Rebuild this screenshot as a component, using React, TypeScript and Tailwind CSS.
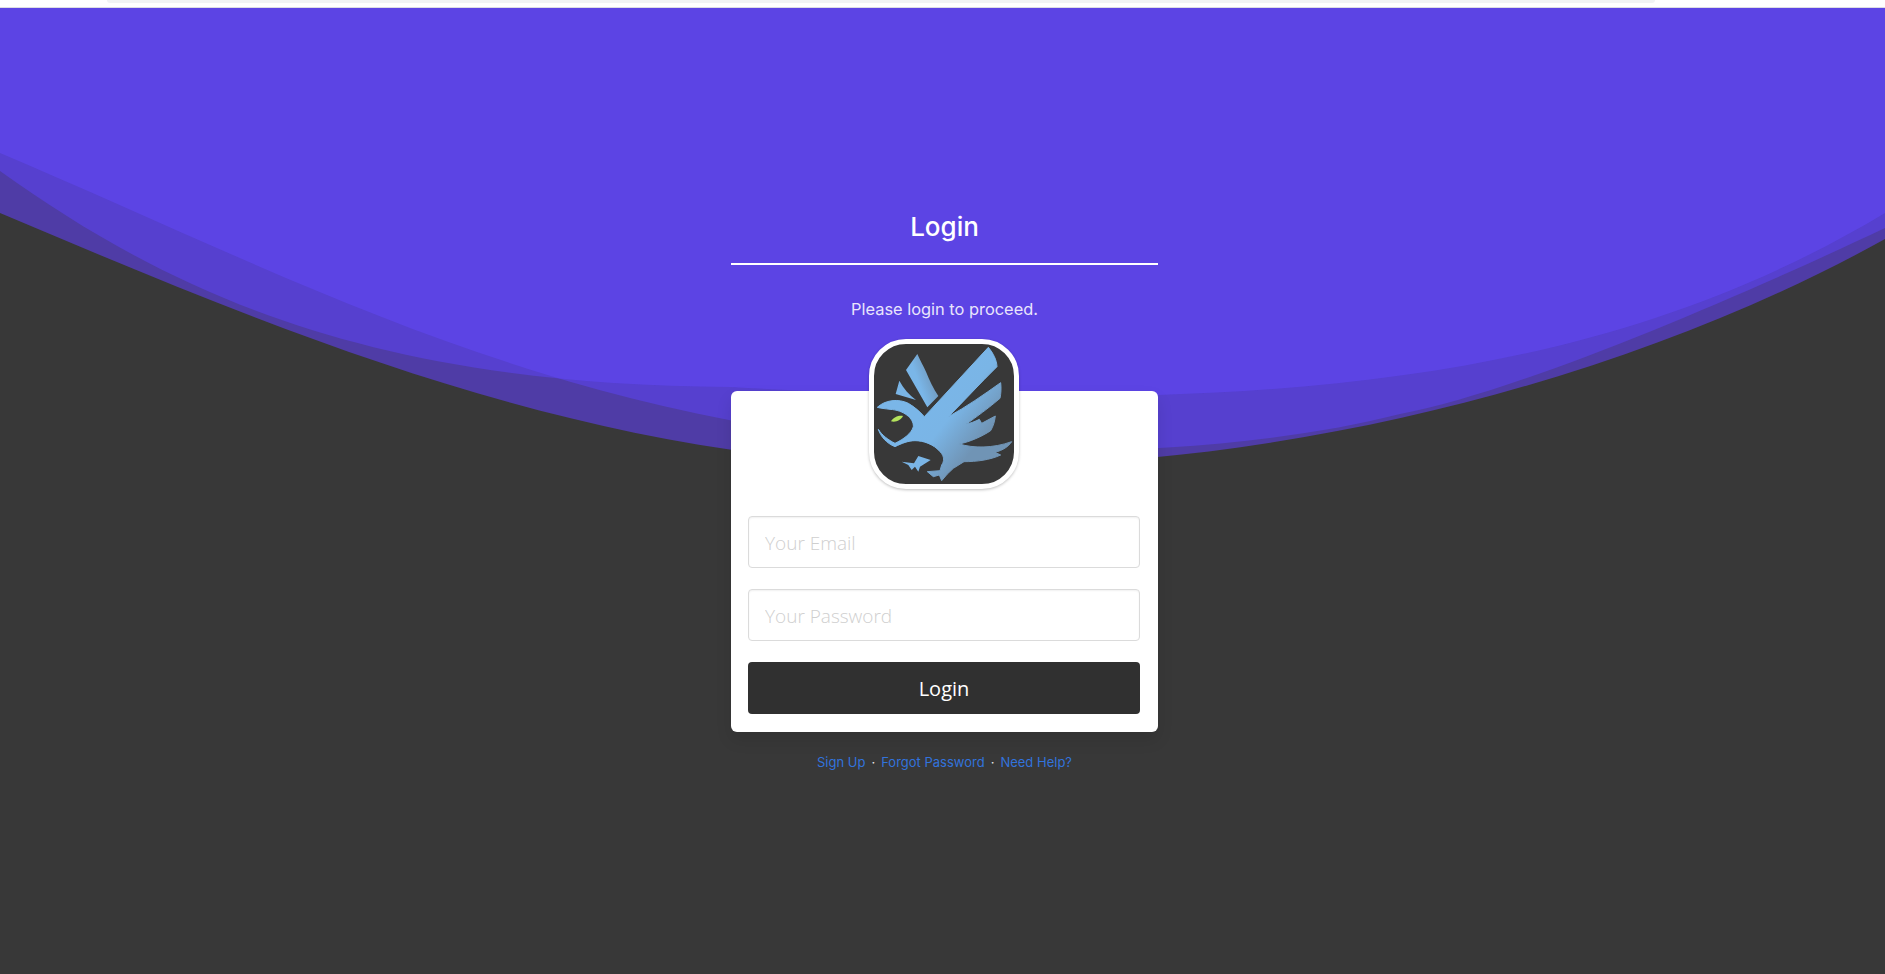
const EDGE = "M0,213 C300,340 600,465 945,466 C1300,472 1650,370 1885,239 L1885,0 L0,0 Z";
const CURVE_A = "M0,153 C300,280 560,425 950,447 C1100,458 1280,445 1400,414 C1520,392 1750,292 1885,228 L1885,0 L0,0 Z";
const CURVE_C = "M0,171 C180,300 380,385 731,387 C860,394 1000,399 1158,395 C1450,386 1680,336 1885,213 L1885,0 L0,0 Z";

function Waves() {
  return (
    <svg className="absolute inset-0 h-full w-full" viewBox="0 0 1885 974" preserveAspectRatio="none" aria-hidden="true">
      <defs>
        <clipPath id="clipC">
          <path d={CURVE_C} />
        </clipPath>
      </defs>
      <path d={EDGE} fill="#4f3ca6" />
      <path d={CURVE_A} fill="#5640cf" />
      <path d={CURVE_C} fill="#5640cf" />
      <path d={CURVE_A} fill="#5c44e4" clipPath="url(#clipC)" />
    </svg>
  );
}

function Logo() {
  return (
    <div className="relative z-10 -mb-[98px] ml-[138px] h-[150px] w-[150px] overflow-hidden rounded-[37px] border-[5px] border-white bg-[#383838] shadow-[0_1px_3px_rgba(0,0,0,0.25)]">
      <svg viewBox="102 72 420 420" className="block h-full w-full" aria-hidden="true">
        <defs>
          <linearGradient id="birdFill" gradientUnits="userSpaceOnUse" x1="320" y1="180" x2="470" y2="300">
            <stop offset="0" stopColor="#7ab6e8" />
            <stop offset="0.4" stopColor="#7ab5e6" />
            <stop offset="1" stopColor="#7094b5" />
          </linearGradient>
          <linearGradient id="wingFill" gradientUnits="userSpaceOnUse" x1="235" y1="185" x2="290" y2="165">
            <stop offset="0" stopColor="#7ab6e8" />
            <stop offset="1" stopColor="#6f93b4" />
          </linearGradient>
        </defs>
        <path
          fill="url(#birdFill)"
          stroke="url(#birdFill)"
          strokeWidth="3"
          strokeLinejoin="round"
          d="M112,262 C135,240 175,235 205,250 C225,262 240,275 253,290 L445,82 C460,100 470,120 471,140 C420,190 370,245 325,290 C380,260 430,225 482,188 C484,205 483,220 480,235 C445,265 410,290 378,313 C390,310 405,305 418,298 L425,310 L466,288 C464,305 460,318 452,332 C425,350 390,365 358,372 C400,385 460,385 515,365 C505,380 490,390 465,397 L482,405 C450,420 410,425 372,425 L340,445 L322,462 L305,482 L298,465 L280,470 L262,455 L300,452 L305,435 C312,425 315,410 300,395 C280,372 250,362 225,362 C205,362 185,370 165,380 C140,370 122,350 115,328 C125,345 145,360 165,370 C190,358 215,340 220,320 C222,295 190,270 150,268 C135,266 122,265 112,262 Z"
        />
        <path fill="url(#wingFill)" d="M232,102 L198,150 L262,262 L295,228 C280,205 268,180 258,155 C250,138 240,120 232,102 Z" />
        <path fill="#7ab5e6" d="M178,182 L167,222 L228,240 C208,225 190,205 178,182 Z" />
        <path fill="#7ab5e6" d="M185,425 L222,430 L235,408 L272,420 L240,440 L235,455 L225,440 L215,450 L205,435 Z" />
        <path fill="#b4e35c" d="M153,304 C160,292 175,286 189,288 C183,300 168,308 153,304 Z" />
      </svg>
    </div>
  );
}

const inputClass =
  "block h-[52px] w-full rounded border border-[#dbdbdb] bg-white px-[16px] pt-[2px] font-['Open_Sans',sans-serif] text-[19px] font-light text-[#363636] shadow-[inset_0_1px_2px_rgba(10,10,10,0.06)] outline-none placeholder:text-[#cfcfcf]";

export default function App() {
  return (
    <div className="flex h-[974px] flex-col overflow-hidden bg-[#383838]">
      <header className="relative z-10 h-[8px] shrink-0 border-b border-[#dcdce4] bg-white">
        <div className="ml-[107px] h-[3px] w-[1548px] rounded-b-md bg-[#f1f3f4]" />
      </header>
      <main className="relative flex-1 pl-[4px]">
        <div className="absolute inset-0 -top-[8px]">
          <Waves />
        </div>
        <div className="relative mx-auto flex w-[427px] flex-col pt-[199px] font-['Inter',sans-serif]">
          <h1 className="text-center text-[26px] leading-[40px] font-medium text-white">Login</h1>
          <div className="mt-[16px] h-[2px] bg-white" />
          <p className="mt-[32px] text-center text-[16.4px] leading-[24px] text-[#e9e5fc]">Please login to proceed.</p>
          <div className="mt-[18px]">
            <Logo />
            <form className="flex flex-col gap-[21px] rounded-md bg-white pt-[125px] pr-[18px] pb-[18px] pl-[17px] shadow-[0_8px_16px_rgba(10,10,10,0.1)]">
              <input className={inputClass} type="email" placeholder="Your Email" />
              <input className={inputClass} type="password" placeholder="Your Password" />
              <button
                type="button"
                className="h-[52px] rounded bg-[#303030] pt-[2px] font-['Open_Sans',sans-serif] text-[20px] text-white"
              >
                Login
              </button>
            </form>
          </div>
          <p className="mt-[21px] flex items-center justify-center gap-[6px] text-[13px] leading-[18px] text-[#e8e8e8]">
            <a className="text-[#3273dc]" href="#signup">Sign Up</a>
            <span>·</span>
            <a className="text-[#3273dc]" href="#forgot">Forgot Password</a>
            <span>·</span>
            <a className="text-[#3273dc]" href="#help">Need Help?</a>
          </p>
        </div>
      </main>
    </div>
  );
}
